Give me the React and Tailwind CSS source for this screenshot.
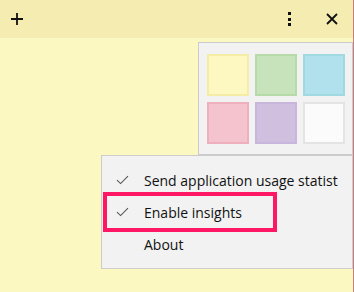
// Sticky note with colour picker + overflow menu open
const swatches = [
  { fill: 'bg-[#fdf8c1]', border: 'border-[#f5eda6]' },
  { fill: 'bg-[#c7e3bb]', border: 'border-[#b6dba8]' },
  { fill: 'bg-[#b1e1ec]', border: 'border-[#a1d9e1]' },
  { fill: 'bg-[#f5c3cd]', border: 'border-[#efb0be]' },
  { fill: 'bg-[#d1bfe0]', border: 'border-[#c9b6dc]' },
  { fill: 'bg-[#fbfbfb]', border: 'border-[#e4e4e4]' },
];

function Check() {
  return (
    <svg width="13" height="10" viewBox="0 0 13 10" fill="none">
      <path d="M1 5.2 L4.6 8.6 L12 1.2" stroke="#555" strokeWidth="1.1" />
    </svg>
  );
}

function MenuItem({ checked, children }) {
  return (
    <div className="flex items-center h-[32px]">
      <div className="w-[42px] pl-[14px] flex items-center">{checked && <Check />}</div>
      <div className="whitespace-nowrap">{children}</div>
    </div>
  );
}

export default function App() {
  return (
    <div
      className="relative w-[354px] h-[292px] bg-[#fcf8c2] overflow-hidden flex flex-col border-r border-[#c77c80]"
      style={{ fontFamily: '"Open Sans", "Noto Sans", sans-serif' }}
    >
      {/* title bar */}
      <div className="h-[38px] bg-[#f4ecb0] flex items-center shrink-0">
        <div className="ml-[10px] w-[14px] h-[14px] flex items-center justify-center">
          <svg width="14" height="14" viewBox="0 0 14 14">
            <path d="M7 1 V13 M1 7 H13" stroke="#111" strokeWidth="1.8" />
          </svg>
        </div>
        <div className="flex-1" />
        <div className="w-[4px] flex flex-col items-center gap-[2.5px] mr-[35px]">
          <span className="block w-[3px] h-[3px] bg-[#111]" />
          <span className="block w-[3px] h-[3px] bg-[#111]" />
          <span className="block w-[3px] h-[3px] bg-[#111]" />
        </div>
        <div className="mr-[15px]">
          <svg width="12" height="12" viewBox="0 0 12 12">
            <path d="M1 1 L11 11 M11 1 L1 11" stroke="#111" strokeWidth="1.8" />
          </svg>
        </div>
      </div>

      {/* colour picker */}
      <div className="absolute left-[198px] top-[42px] w-[155px] h-[113px] bg-[#f2f2f2] border border-[#cbcbcb] pl-[8px] pt-[11px]">
        <div className="grid grid-cols-[42px_42px_42px] gap-[6px]">
          {swatches.map((s, i) => (
            <div key={i} className={`w-[42px] h-[42px] border-2 ${s.fill} ${s.border}`} />
          ))}
        </div>
      </div>

      {/* overflow menu */}
      <div className="absolute left-[101px] top-[155px] w-[252px] h-[114px] bg-[#f2f2f2] border border-[#cccccc] pt-[8px] text-[14px] text-[#111]">
        <MenuItem checked>Send application usage statist</MenuItem>
        <MenuItem checked>Enable insights</MenuItem>
        <MenuItem>About</MenuItem>
      </div>

      {/* highlight */}
      <div className="absolute left-[103px] top-[192px] w-[174px] h-[40px] border-[4px] border-[#fe1764]" />
    </div>
  );
}
